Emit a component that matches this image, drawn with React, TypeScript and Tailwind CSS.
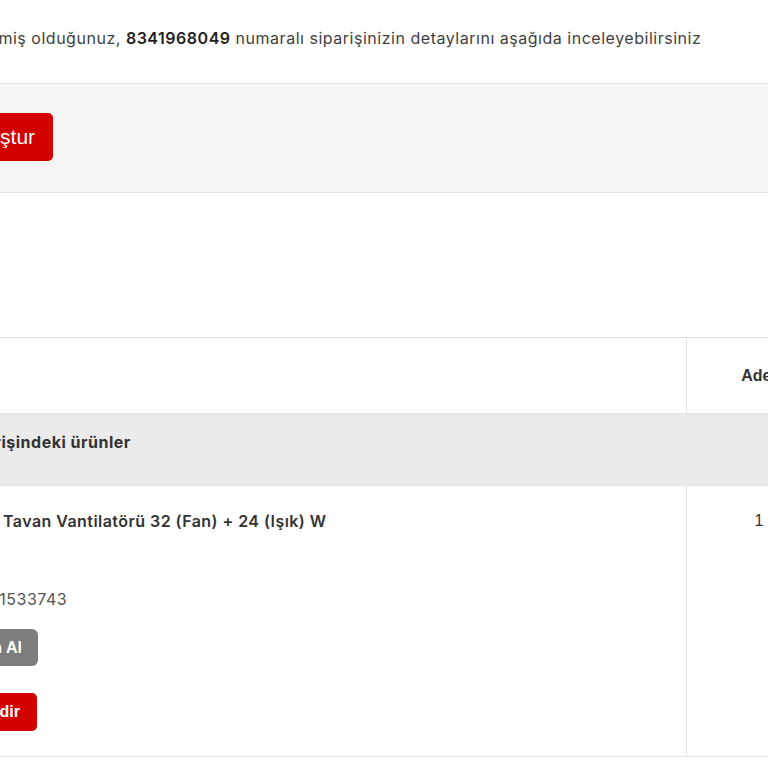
import React from "react";

const body = { fontFamily: "Inter, 'Noto Sans', sans-serif" };
const arial = { fontFamily: "'Liberation Sans', Arial, sans-serif" };

export default function App() {
  return (
    <div className="w-[768px] h-[768px] overflow-hidden bg-white text-[#333]" style={body}>
      <div className="w-[900px]">
        {/* intro line */}
        <div className="h-[83px] pt-[27px]">
          <p className="-ml-[29px] whitespace-nowrap text-[16px] leading-[22px] tracking-[0.52px] text-[#3f3f3f]">
            Vermiş olduğunuz, <b className="font-semibold text-[#222]">8341968049</b> numaralı siparişinizin detaylarını aşağıda inceleyebilirsiniz
          </p>
        </div>

        {/* action bar */}
        <div className="h-[110px] border-y border-[#e3e3e3] bg-[#f4f4f4] pt-[29px]">
          <button
            className="-ml-[116px] h-[48px] rounded-[5px] bg-[#d30000] pl-[18px] pr-[18px] text-[21px] text-white"
            style={arial}
          >
            Sepeti Oluştur
          </button>
        </div>

        <div className="h-[144px]" />

        {/* table */}
        <div className="w-[831px] border-t border-[#e3e3e3]" style={arial}>
          <div className="flex h-[75px]">
            <div className="flex-1" />
            <div className="flex w-[145px] items-center justify-center border-l border-[#e3e3e3] text-[16px] font-bold text-[#333]">
              Adet
            </div>
          </div>
          <div className="h-[73px] border-y border-[#e3e3e3] bg-[#ebebeb] pt-[16px]">
            <p className="-ml-[42px] text-[16px] leading-[24px] tracking-[0.5px] font-bold text-[#333]" style={body}>
              Siparişindeki ürünler
            </p>
          </div>
          <div className="flex h-[271px] border-b border-[#e3e3e3]">
            <div className="flex-1 pt-[23px]">
              <p className="ml-[3px] text-[16px] leading-[24px] tracking-[0.45px] font-semibold text-[#333]" style={body}>
                Tavan Vantilatörü 32 (Fan) + 24 (Işık) W
              </p>
              <p className="mt-[54px] -ml-[11px] text-[16px] leading-[24px] tracking-[0.5px] text-[#555]" style={body}>
                21533743
              </p>
              <div className="mt-[18px]">
                <button className="-ml-[51px] h-[37px] rounded-[6px] bg-[#7d7d7d] pl-[14px] pr-[16px] text-[16px] font-bold text-white">
                  Satın Al
                </button>
              </div>
              <div className="mt-[27px]">
                <button className="-ml-[83px] h-[38px] rounded-[5px] bg-[#d30000] pl-[14px] pr-[17px] text-[16px] font-bold text-white">
                  Değerlendir
                </button>
              </div>
            </div>
            <div className="w-[145px] border-l border-[#e3e3e3] pt-[23px] text-center text-[16px] leading-[24px] text-[#333]">
              1
            </div>
          </div>
        </div>
      </div>
    </div>
  );
}
